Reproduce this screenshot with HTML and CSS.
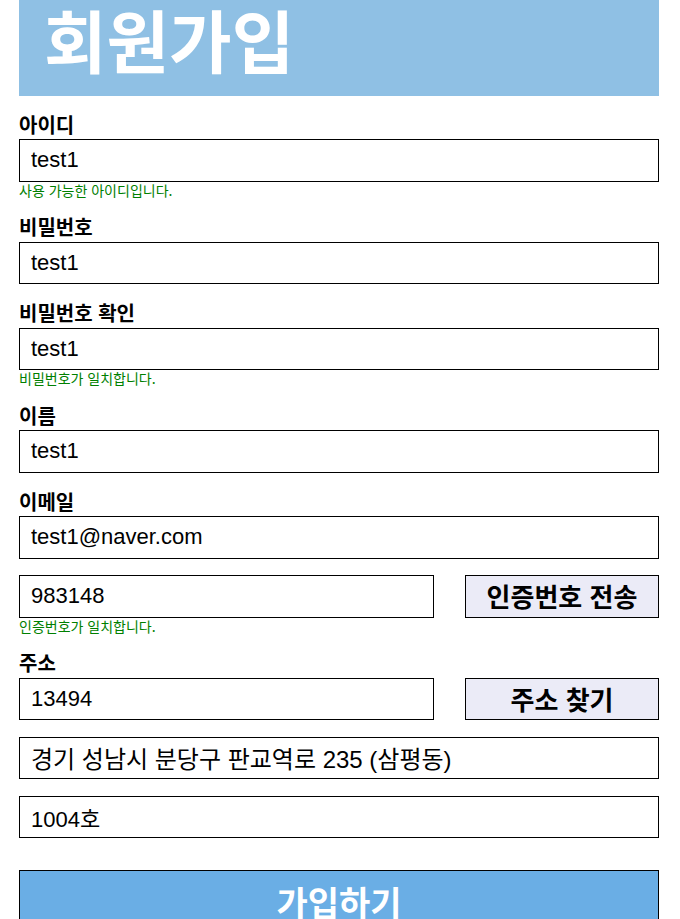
FILE: index.html
```html
<!DOCTYPE html>
<html lang="ko">
<head>
<meta charset="utf-8">
<title>회원가입</title>
<link rel="stylesheet" href="styles.css">
</head>
<body>
<div class="page">
  <header class="header"><h1 class="title">회원가입</h1></header>
  <form class="form">
    <label class="label label-first">아이디</label>
    <input class="input" type="text" value="test1">
    <p class="msg">사용 가능한 아이디입니다.</p>

    <label class="label">비밀번호</label>
    <input class="input" type="text" value="test1">

    <label class="label">비밀번호 확인</label>
    <input class="input" type="text" value="test1">
    <p class="msg">비밀번호가 일치합니다.</p>

    <label class="label">이름</label>
    <input class="input" type="text" value="test1">

    <label class="label">이메일</label>
    <input class="input" type="text" value="test1@naver.com">

    <div class="row row-auth">
      <input class="input input-half" type="text" value="983148">
      <button type="button" class="btn-side">인증번호 전송</button>
    </div>
    <p class="msg">인증번호가 일치합니다.</p>

    <label class="label">주소</label>
    <div class="row">
      <input class="input input-half" type="text" value="13494">
      <button type="button" class="btn-side">주소 찾기</button>
    </div>
    <input class="input input-kr gap-top" type="text" value="경기 성남시 분당구 판교역로 235 (삼평동)">
    <input class="input gap-top" type="text" value="1004호">

    <button type="button" class="btn-submit">가입하기</button>
  </form>
</div>
</body>
</html>
```
FILE: styles.css
```css
* { box-sizing: border-box; }
html, body { margin: 0; padding: 0; background: #fff; }
body { font-family: "Liberation Sans", "Noto Sans CJK KR", sans-serif; color: #000; }
.page { width: 640px; margin: 0 19px; }
.header { height: 96px; background: #8fc0e4; padding: 2px 0 0 25px; display: flex; align-items: flex-start; }
.title { margin: 0; font-family: "Noto Sans CJK KR", sans-serif; font-size: 68px; font-weight: 700; color: #fff; line-height: 1.1; }
.form { display: flex; flex-direction: column; }
.label { display: block; margin-top: 19px; height: 24.5px; padding-bottom: 4.5px; line-height: 20px; font-family: "Noto Sans CJK KR", sans-serif; font-size: 20px; font-weight: 700; }
.label-first { margin-top: 18.5px; }
.input { display: block; width: 100%; height: 42.5px; flex: none; border: 1px solid #000; border-radius: 0; padding: 0 11px; font-family: "Liberation Sans", "Noto Sans CJK KR", sans-serif; font-size: 22px; color: #000; background: #fff; outline: none; margin: 0; }
.input-kr { font-size: 24px; }
.msg { margin: 0; height: 16.5px; line-height: 16.5px; font-family: "Noto Sans CJK KR", sans-serif; font-size: 14px; color: #008000; }
.row { display: flex; justify-content: space-between; }
.row-auth { margin-top: 16.5px; }
.input-half { width: 415px; }
.btn-side { width: 194px; height: 42.5px; border: 1px solid #000; border-radius: 0; background: #ebebf7; font-family: "Noto Sans CJK KR", sans-serif; font-size: 26px; font-weight: 700; color: #000; padding: 0; margin: 0; line-height: 1; }
.gap-top { margin-top: 16.5px; }
.btn-submit { margin-top: 32px; height: 64px; width: 100%; border: 1px solid #000; border-radius: 0; background: #6aaee5; color: #fff; font-family: "Noto Sans CJK KR", sans-serif; font-size: 34px; font-weight: 700; padding: 0; line-height: 1; }
```
